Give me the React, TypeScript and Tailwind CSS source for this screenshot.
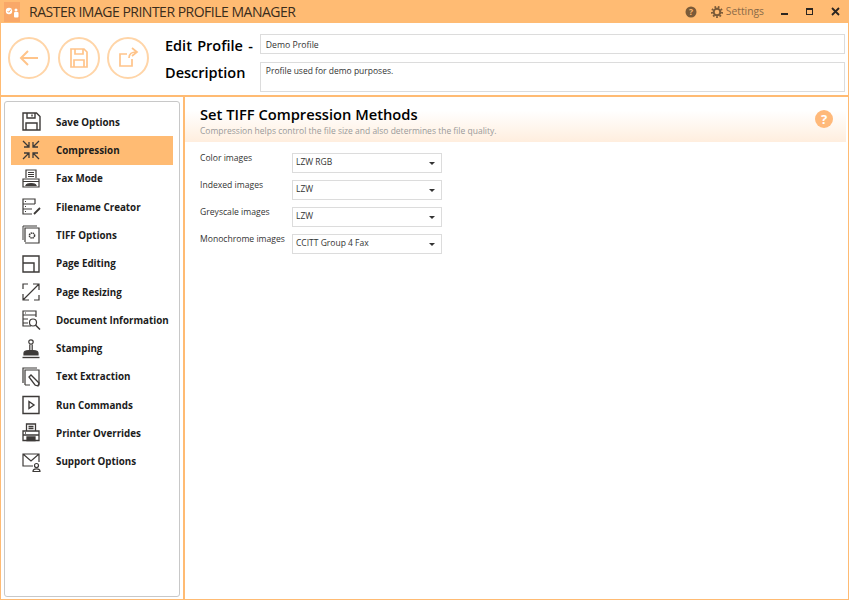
import React from "react";

const ink = "#3d3a38";
const sv = { fill: "none", stroke: ink, strokeWidth: 1.2 } as const;

const icons: Record<string, React.ReactNode> = {
  save: <g {...sv} strokeWidth={1.4}><path d="M2 1h13.500L19 4.500V18H2z" /><path d="M6 1v5h8V1M11 2.500v2M5 18v-7h11v7" /></g>,
  compress: <g {...sv} strokeWidth={1.3}><path d="M2 1l6 6M8 2v5H3M18 1l-6 6M12 2v5h5M2 19l6-6M8 18v-5H3M18 19l-6-6M12 18v-5h5" /></g>,
  fax: <g {...sv}><path d="M5 9V1h10v8M7 3.500h6M7 5.500h6M7 7.500h6" /><path d="M2 18V10h16v8zM2 12.500h16" /><path d="M5 16.500c1-2.500 9-2.500 10 0z" fill={ink} /></g>,
  file: <g {...sv}><path d="M14 7V2H2v15h9M2 7h12M2 12h9M4 4.500h1M4 9.500h1M4 14.500h1" /><path d="M13 17l6-6" strokeWidth={1.8} /></g>,
  tiff: <g {...sv}><path d="M2 15V1h14" strokeWidth={1} /><path d="M4 17V3h14v15H4" /><circle cx="11" cy="10.500" r="2.600" strokeWidth={1.5} strokeDasharray="1.500 .6" /></g>,
  page: <g {...sv} strokeWidth={1.4}><path d="M2 2h16v16H2zM2 9h11v9" /></g>,
  resize: <g {...sv}><path d="M2 7V2h5M13 18h5v-5M2.500 17.500l15-15M12 2h6v6M2 12v6h6" /></g>,
  doc: <g {...sv}><path d="M10 16H2V1h13v6M2 5h13M2 9h5M2 13h5M4 3h1" /><circle cx="12" cy="12.500" r="3.500" /><path d="M14.500 15L19 19.500" strokeWidth={1.5} /></g>,
  stamp: <g {...sv} strokeWidth={1.2}><circle cx="10" cy="3" r="2.200" /><path d="M8.800 5.500v6M11.200 5.500v6" /><path d="M3 16v-2c0-1.800 2-2.500 5-2.500h4c3 0 5 .7 5 2.500v2z" fill={ink} /><path d="M1.500 18.500h17" strokeWidth={1.4} /></g>,
  text: <g {...sv}><path d="M2 16V1h14" /><path d="M4 18V3h14v15h-4M4 18h5" /><path d="M8 10l2-2 8 8-1 3-3-1z" fill="#fff" strokeWidth={1.3} /></g>,
  run: <g {...sv} strokeWidth={1.4}><path d="M2 1.500h16v17H2z" /><path d="M8 6.500l5 3.500-5 3.500z" /></g>,
  printer: <g {...sv} strokeWidth={1.3}><path d="M5.500 8V1h9v7M7.500 3.500h5M7.500 5.500h5" /><path d="M2 17.500V8h16v9.500zM2 12h16" /><path d="M6 14h8v3.500H6z" fill={ink} /><path d="M4 10h1" /></g>,
  mail: <g {...sv}><path d="M12 14H2V2h16v8M2 2l8 7 8-7" /><circle cx="15.500" cy="13.500" r="2" /><path d="M12 19.500c0-3.500 7-3.500 7 0z" /></g>,
};

const items: [string, string][] = [
  ["Save Options", "save"],
  ["Compression", "compress"],
  ["Fax Mode", "fax"],
  ["Filename Creator", "file"],
  ["TIFF Options", "tiff"],
  ["Page Editing", "page"],
  ["Page Resizing", "resize"],
  ["Document Information", "doc"],
  ["Stamping", "stamp"],
  ["Text Extraction", "text"],
  ["Run Commands", "run"],
  ["Printer Overrides", "printer"],
  ["Support Options", "mail"],
];

const fields: [string, string][] = [
  ["Color images", "LZW RGB"],
  ["Indexed images", "LZW"],
  ["Greyscale images", "LZW"],
  ["Monochrome images", "CCITT Group 4 Fax"],
];

function RoundBtn({ children }: { children: React.ReactNode }) {
  return (
    <div className="w-[42px] h-[42px] rounded-full border-2 border-[#ffd5a8] flex items-center justify-center">
      <svg width="24" height="24" viewBox="0 0 24 24" fill="none" stroke="#ffc48a" strokeWidth="1.700">
        {children}
      </svg>
    </div>
  );
}

export default function App() {
  return (
    <div className="w-[849px] h-[600px] bg-white flex flex-col overflow-hidden text-[#222] font-['Open_Sans','Noto_Sans',sans-serif]">
      {/* title bar */}
      <div className="h-[23px] shrink-0 bg-[#ffbb73] flex items-center">
        <svg className="ml-[4px]" width="16" height="20" viewBox="0 0 16 20">
          <rect x="0" y="0" width="16" height="20" fill="#f9a868" />
          <circle cx="5" cy="9" r="3.200" fill="#fff" />
          <path d="M3.500 9l1.300 1.300L7 7.500" fill="none" stroke="#f9a868" strokeWidth="1" />
          <circle cx="12" cy="8" r="1.500" fill="#fff" />
          <rect x="10" y="10" width="4.500" height="5.500" rx="1" fill="#fff" />
        </svg>
        <span className="ml-[9px] text-[14px] text-[#3a2c1c] leading-none tracking-[-0.5px]">RASTER IMAGE PRINTER PROFILE MANAGER</span>
        <div className="ml-auto flex items-center">
          <svg width="12" height="12" viewBox="0 0 12 12">
            <circle cx="6" cy="6" r="5.500" fill="#7a5a38" />
            <text x="6" y="9" textAnchor="middle" fontSize="8.500" fontWeight="700" fill="#ffbb73" fontFamily="Open Sans">?</text>
          </svg>
          <svg className="ml-[14px]" width="12" height="12" viewBox="0 0 12 12">
            <circle cx="6" cy="6" r="3.300" fill="none" stroke="#7a5a38" strokeWidth="2" />
            <circle cx="6" cy="6" r="5" fill="none" stroke="#7a5a38" strokeWidth="2" strokeDasharray="1.700 1.700" />
          </svg>
          <span className="ml-[3px] text-[10.300px] text-[#8a6a48]">Settings</span>
          <div className="ml-[17px] w-[7px] h-[2.500px] mt-[5px] bg-[#2b2520]" />
          <div className="ml-[18px] w-[7px] h-[7px] border border-[#2b2520] border-t-2" />
          <svg className="ml-[18px] mr-[9px]" width="9" height="9" viewBox="0 0 9 9" stroke="#2b2520" strokeWidth="1.800">
            <path d="M1 1l7 7M8 1l-7 7" />
          </svg>
        </div>
      </div>

      {/* profile header */}
      <div className="h-[74px] shrink-0 flex border-l border-r border-[#ffbb73] border-b-2">
        <div className="flex items-center gap-[7.500px] ml-[7px] pb-[2px]">
          <RoundBtn><path d="M21 12H4M11 5l-7 7 7 7" strokeWidth="2" /></RoundBtn>
          <RoundBtn><path d="M4 3h13l3 3v15H4zM8 3v5h8V3M7 21v-7h10v7" /></RoundBtn>
          <RoundBtn><path d="M16 13v7H4V8h7M13 12c0-4 3-6 7-6M16 2l5 4-5 4" /></RoundBtn>
        </div>
        <div className="ml-[16px] flex flex-col pt-[9px]">
          <span className="text-[14.500px] leading-[27px] font-semibold text-black [word-spacing:1.500px]">Edit Profile -</span>
          <span className="text-[14.500px] leading-[27px] font-semibold text-black">Description</span>
        </div>
        <div className="flex-1 ml-[7px] mr-[3px] pt-[11px] flex flex-col gap-[8px]">
          <div className="h-[20px] border border-[#dcdcdc] px-[5px] text-[8.700px] leading-[20px] text-[#333]">Demo Profile</div>
          <div className="h-[30px] border border-[#dcdcdc] px-[5px] pt-[1px] text-[8.500px] leading-[14px] text-[#333]">Profile used for demo purposes.</div>
        </div>
      </div>

      {/* body */}
      <div className="flex-1 flex min-h-0 border-l border-r border-b border-[#ffbb73]">
        {/* sidebar */}
        <div className="w-[184px] shrink-0 border-r-2 border-[#ffbb73] pl-[3px] pr-[3px] pt-[4px] pb-[2px]">
          <div className="h-full w-[176px] border border-[#c8c8c8] rounded-[3px] pt-[6px] px-[6px]">
            {items.map(([label, icon]) => (
              <div
                key={label}
                className={`h-[28.300px] flex items-center ${label === "Compression" ? "bg-[#ffbb73]" : ""}`}
              >
                <svg className="ml-[10px] shrink-0" width="20" height="20" viewBox="0 0 20 20">{icons[icon]}</svg>
                <span className="ml-[15px] mt-[2px] text-[9.800px] font-bold whitespace-nowrap text-[#1c1c1c]">{label}</span>
              </div>
            ))}
          </div>
        </div>

        {/* content */}
        <div className="flex-1 min-w-0 pr-[2px]">
          <div className="h-[45px] pl-[15px] pr-[13px] pt-[8px] bg-gradient-to-b from-white from-30% to-[#ffeede] flex justify-between">
            <div>
              <div className="text-[14.700px] leading-[18px] font-semibold text-black">Set TIFF Compression Methods</div>
              <div className="mt-[3px] text-[8.500px] leading-[10px] text-[#9a9a9a]">Compression helps control the file size and also determines the file quality.</div>
            </div>
            <div className="w-[18px] h-[18px] mt-[5px] rounded-full bg-[#ffb97a] text-white text-[13px] leading-[18px] font-bold text-center">?</div>
          </div>
          <div className="pl-[15px] pt-[11px] flex flex-col gap-[7px]">
            {fields.map(([label, value]) => (
              <div key={label} className="flex items-start h-[20px]">
                <span className="w-[92px] text-[8.600px] leading-[11px] text-[#333] whitespace-nowrap">{label}</span>
                <div className="w-[150px] h-[20px] border border-[#dcdcdc] pl-[3px] pr-[6px] flex items-center justify-between text-[8.500px] text-[#333]">
                  <span className="mb-[1px]">{value}</span>
                  <span className="w-0 h-0 border-l-[3px] border-r-[3px] border-t-[3px] border-l-transparent border-r-transparent border-t-[#333]" />
                </div>
              </div>
            ))}
          </div>
        </div>
      </div>
    </div>
  );
}
